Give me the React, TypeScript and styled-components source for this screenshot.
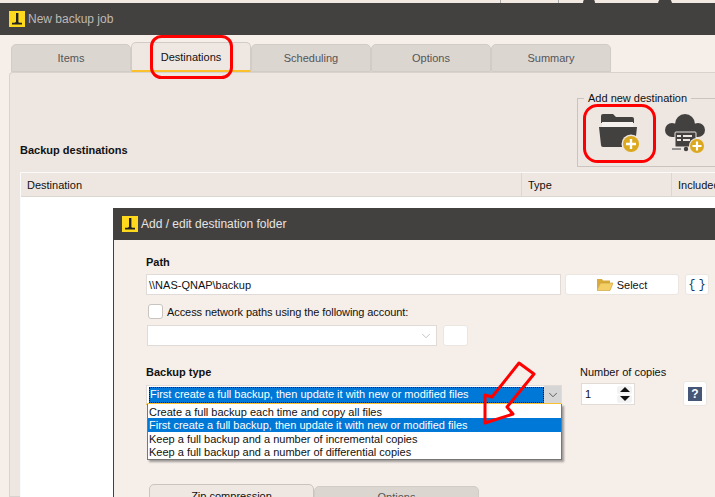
import { ChevronDown } from 'lucide-react'
import styled, { createGlobalStyle } from 'styled-components'

const GlobalStyle = createGlobalStyle`
  html, body {
    margin: 0;
    padding: 0;
    background: #f5eee9;
  }
  * {
    box-sizing: border-box;
  }
`

const Page = styled.div`
  position: relative;
  width: 715px;
  height: 497px;
  overflow: hidden;
  background: #f5eee9;
  color: #111;
  font: 11px 'Liberation Sans', Arial, sans-serif;
`

const TitleBar = styled.div<{ $height: number; $inset: number }>`
  display: flex;
  align-items: center;
  gap: 3px;
  height: ${(p) => p.$height}px;
  padding-left: ${(p) => p.$inset}px;
  background: #434140;
  flex: none;
`

const TitleText = styled.span<{ $light?: boolean }>`
  color: ${(p) => (p.$light ? '#e8e4e0' : '#bdb9b5')};
  font-size: 12px;
`

const TopStrip = styled.div`
  height: 3px;
  background: #f2e9e3;
  svg {
    display: block;
  }
`

const TabRow = styled.div<{ $top: number; $left: number; $width: number }>`
  display: flex;
  align-items: flex-end;
  height: ${(p) => p.$top}px;
  margin-left: ${(p) => p.$left}px;
  width: ${(p) => p.$width}px;
`

const Tab = styled.div<{ $active?: boolean; $width: number }>`
  width: ${(p) => p.$width}px;
  height: ${(p) => (p.$active ? 30 : 28)}px;
  display: flex;
  align-items: center;
  justify-content: center;
  background: ${(p) => (p.$active ? '#eee7e2' : '#dcd6d1')};
  border: 1px solid #d2ccc7;
  border-bottom: ${(p) => (p.$active ? '2px solid #fbc02d' : '1px solid #d2ccc7')};
  border-radius: 5px 5px 0 0;
  color: ${(p) => (p.$active ? '#111' : '#555')};
`

const BottomTabs = styled.div`
  display: flex;
  align-items: flex-start;
  margin: 78px 0 0 3px;
  height: 26px;
`

const BottomTab = styled.div<{ $active?: boolean; $width: number }>`
  width: ${(p) => p.$width}px;
  height: 26px;
  margin-top: ${(p) => (p.$active ? 0 : 2)}px;
  padding-top: ${(p) => (p.$active ? 5 : 4)}px;
  text-align: center;
  background: ${(p) => (p.$active ? '#eee7e2' : '#dcd6d1')};
  border: 1px solid ${(p) => (p.$active ? '#c9c4bf' : '#d2ccc7')};
  border-radius: 5px 5px 0 0;
  color: ${(p) => (p.$active ? '#111' : '#555')};
`

const Panel = styled.div`
  margin-left: 9px;
  height: 425px;
  padding: 25px 0 0 10px;
  background: #ede6e1;
  border: 1px solid #d8d3ce;
  border-right: 0;
  border-radius: 4px 0 0 0;
`

const PanelTop = styled.div`
  display: flex;
  justify-content: space-between;
  align-items: flex-end;
  height: 69px;
`

const SectionTitle = styled.div`
  font-weight: 700;
  margin-bottom: 11px;
`

const GroupBox = styled.div`
  position: relative;
  display: flex;
  width: 150px;
  height: 69px;
  margin-right: -12px;
  padding: 7px 0 0 16px;
  gap: 20px;
  border: 1px solid #c9c4bf;
  border-right: 0;
`

const GroupLegend = styled.span`
  position: absolute;
  top: -7px;
  left: 6px;
  padding: 0 4px;
  line-height: 13px;
  background: #ede6e1;
`

const IconSlot = styled.div<{ $width: number }>`
  width: ${(p) => p.$width}px;
  height: 56px;
  flex: none;
  display: flex;
  align-items: center;
  justify-content: center;
`

const Table = styled.div`
  margin-top: 5px;
  height: 330px;
  background: #fff;
  border-top: 1px solid #fbfafa;
  border-left: 1px solid #fbfafa;
`

const TableHead = styled.div`
  display: grid;
  grid-template-columns: 501px 150px 1fr;
  height: 24px;
  background: #ede6e1;
  border-bottom: 1px solid #dcd6d1;
`

const HeadCell = styled.div`
  display: flex;
  align-items: center;
  padding-left: 6px;
  white-space: nowrap;
  border-right: 1px solid #dcd6d1;
`

const Dialog = styled.div`
  position: absolute;
  left: 113px;
  top: 208px;
  width: 602px;
  height: 289px;
  display: flex;
  flex-direction: column;
  overflow: hidden;
  background: #f5eee9;
  border-left: 1px solid #434140;
`

const DialogBody = styled.div`
  padding: 15px 0 0 32px;
  display: flex;
  flex-direction: column;
`

const Label = styled.div`
  font-weight: 700;
  line-height: 14px;
`

const Row = styled.div<{ $gap?: number; $top?: number }>`
  display: flex;
  align-items: center;
  gap: ${(p) => p.$gap ?? 4}px;
  margin-top: ${(p) => p.$top ?? 0}px;
`

const Field = styled.div<{ $width: number; $inset?: number }>`
  display: flex;
  align-items: center;
  justify-content: space-between;
  width: ${(p) => p.$width}px;
  height: 21px;
  margin-left: ${(p) => p.$inset ?? 0}px;
  padding: 0 3px 0 2px;
  background: #fff;
  border: 1px solid #e0dbd6;
`

const WhiteButton = styled.div<{ $width: number; $height?: number; $offset?: number }>`
  display: flex;
  align-items: center;
  justify-content: center;
  gap: 4px;
  width: ${(p) => p.$width}px;
  height: ${(p) => p.$height ?? 21}px;
  margin-left: ${(p) => p.$offset ?? 0}px;
  background: #fff;
  border: 1px solid #ece6e1;
  border-radius: 3px;
`

const BraceText = styled.span`
  font: 12px 'Liberation Mono', monospace;
  letter-spacing: -2px;
  margin-left: -2px;
  color: #123a66;
`

const Check = styled.div`
  width: 15px;
  height: 15px;
  margin-left: 2px;
  background: #fff;
  border: 1px solid #c9c4bf;
  border-radius: 3px;
`

const CheckLabel = styled.span`
  letter-spacing: -0.08px;
`

const TypeRow = styled.div`
  display: flex;
  margin-top: 19px;
`

const TypeColumn = styled.div`
  position: relative;
  width: 434px;
`

const Combo = styled.div`
  display: flex;
  align-items: center;
  justify-content: space-between;
  width: 416px;
  height: 20px;
  margin-top: 6px;
  background: #fff;
  border: 1px solid #e0dbd6;
  border-bottom: 2px solid #fbc02d;
`

const ComboValue = styled.div`
  flex: 1;
  height: 16px;
  margin-left: 2px;
  padding-left: 1px;
  line-height: 15px;
  color: #fff;
  background: #0078d7;
  outline: 1px dotted #111;
  outline-offset: -1px;
`

const ComboArrow = styled.div`
  width: 17px;
  height: 17px;
  display: flex;
  align-items: center;
  justify-content: center;
  background: #d6d6d6;
`

const DropList = styled.div`
  position: absolute;
  top: 39px;
  left: 1px;
  width: 415px;
  padding: 1px 0;
  background: #fff;
  border: 1px solid #777;
  border-top: 0;
  box-shadow: 2px 2px 2px rgba(0, 0, 0, 0.35);
`

const DropItem = styled.div<{ $selected?: boolean }>`
  height: 13.3px;
  padding-left: 1px;
  line-height: 14px;
  color: ${(p) => (p.$selected ? '#fff' : '#111')};
  background: ${(p) => (p.$selected ? '#0078d7' : '#fff')};
`

const CopiesColumn = styled.div`
  width: 60px;
`

const CopiesLabel = styled.div`
  white-space: nowrap;
  line-height: 14px;
`

const Spinner = styled.div`
  display: flex;
  align-items: center;
  justify-content: space-between;
  width: 54px;
  height: 22px;
  margin: 4px 0 0 1px;
  padding: 0 2px 0 3px;
  background: #fff;
  border: 1px solid #e0dbd6;
`

const SpinArrows = styled.div`
  display: flex;
  flex-direction: column;
  gap: 1px;
  width: 15px;
`

const SpinStep = styled.div`
  height: 8px;
  display: flex;
  align-items: center;
  justify-content: center;
  background: #f3f3f3;
  border-radius: 2px;
`

const SpinArrow = styled.div<{ $down?: boolean }>`
  width: 0;
  height: 0;
  border-left: 5px solid transparent;
  border-right: 5px solid transparent;
  ${(p) => (p.$down ? 'border-top: 5px solid #111;' : 'border-bottom: 5px solid #111;')}
`

const HelpSlot = styled.div`
  margin: 16px 0 0 43px;
`

const HelpGlyph = styled.div`
  width: 14px;
  height: 14px;
  display: flex;
  align-items: center;
  justify-content: center;
  background: #465677;
  color: #fff;
  font-weight: 700;
  font-size: 12px;
`

const Annotation = styled.svg`
  position: absolute;
  left: 0;
  top: 0;
  pointer-events: none;
`

const AppLogo = () => (
  <svg width="16" height="16" viewBox="0 0 16 16">
    <rect width="16" height="16" fill="#fdd81d" />
    <path d="M7 2h2.4v8.6c0 .8.5 1.2 1.2 1.2H13v1.6H3v-1.6h2.4c.9 0 1.6-.4 1.6-1.2z" fill="#222" />
  </svg>
)

const FolderAdd = () => (
  <svg width="50" height="50" viewBox="0 0 50 50">
    <path d="M7 7a2 2 0 0 1 2-2h10l3 3h16a2 2 0 0 1 2 2v4H7z" fill="#434140" />
    <path d="M5 18h38l-2 18a2 2 0 0 1-2 2H9a2 2 0 0 1-2-2z" fill="#434140" />
    <rect x="8" y="13" width="31" height="5" fill="#f5f1ee" />
    <circle cx="37" cy="35" r="9.5" fill="#ede6e1" />
    <circle cx="37" cy="35" r="8" fill="#dba81e" />
    <path d="M37 30v10M32 35h10" stroke="#fff" strokeWidth="2.4" />
  </svg>
)

const CloudAdd = () => (
  <svg width="44" height="50" viewBox="0 0 44 50">
    <circle cx="21" cy="15" r="10" fill="#434140" />
    <circle cx="8" cy="21" r="7" fill="#434140" />
    <circle cx="34" cy="21" r="7" fill="#434140" />
    <rect x="8" y="18" width="26" height="10" fill="#434140" />
    <rect x="11" y="23" width="21" height="15" rx="1" fill="#434140" stroke="#ede6e1" />
    <path d="M13 26h4v2h-4zM13 30h4v2h-4zM19 26h9v2h-9zM19 30h7v2h-7z" fill="#ede6e1" />
    <path d="M8 40h9M26 40h6M22 38v2" stroke="#777" strokeWidth="1.6" />
    <circle cx="22" cy="40" r="2.2" fill="#434140" />
    <circle cx="33" cy="37" r="8" fill="#ede6e1" />
    <circle cx="33" cy="37" r="7" fill="#dba81e" />
    <path d="M33 32.5v9M28.5 37h9" stroke="#fff" strokeWidth="2.2" />
  </svg>
)

const FolderOpen = () => (
  <svg width="16" height="13" viewBox="0 0 16 13">
    <path d="M0 1h5l1 1.5h7V5H3.5L0 12z" fill="#d9ab3a" />
    <path d="M3.5 5H16l-3 7.5H0z" fill="#f3cf66" stroke="#c79a30" strokeWidth=".6" />
  </svg>
)

const App = () => {
  return (
    <Page>
      <GlobalStyle />
      <TopStrip>
        <svg width="715" height="3" viewBox="0 0 715 3">
          <path d="M558 0h1v3h-1zM500 0h1v3h-1z" fill="#aaa" />
          <circle cx="589" cy="3" r="6" fill="#434140" />
          <circle cx="665" cy="4" r="7" fill="#434140" />
        </svg>
      </TopStrip>
      <TitleBar $height={32} $inset={9}>
        <AppLogo />
        <TitleText>New backup job</TitleText>
      </TitleBar>
      <TabRow $top={37} $left={11} $width={600}>
        <Tab $width={120}>Items</Tab>
        <Tab $width={120} $active>Destinations</Tab>
        <Tab $width={120}>Scheduling</Tab>
        <Tab $width={120}>Options</Tab>
        <Tab $width={120}>Summary</Tab>
      </TabRow>
      <Panel>
        <PanelTop>
          <SectionTitle>Backup destinations</SectionTitle>
          <GroupBox>
            <GroupLegend>Add new destination</GroupLegend>
            <IconSlot $width={50}><FolderAdd /></IconSlot>
            <IconSlot $width={44}><CloudAdd /></IconSlot>
          </GroupBox>
        </PanelTop>
        <Table>
          <TableHead>
            <HeadCell>Destination</HeadCell>
            <HeadCell>Type</HeadCell>
            <HeadCell>Included</HeadCell>
          </TableHead>
        </Table>
      </Panel>

      <Dialog>
        <TitleBar $height={32} $inset={8}>
          <AppLogo />
          <TitleText $light>Add / edit destination folder</TitleText>
        </TitleBar>
        <DialogBody>
          <Label>Path</Label>
          <Row $top={5}>
            <Field $width={415}>\\NAS-QNAP\backup</Field>
            <WhiteButton $width={114}>
              <FolderOpen />
              Select
            </WhiteButton>
            <WhiteButton $width={24} $offset={2}>
              <BraceText>{'{ }'}</BraceText>
            </WhiteButton>
          </Row>
          <Row $top={9} $gap={4}>
            <Check />
            <CheckLabel>Access network paths using the following account:</CheckLabel>
          </Row>
          <Row $top={6} $gap={6}>
            <Field $width={290} $inset={1}>
              <span />
              <ChevronDown size={14} strokeWidth={1} color="#999" />
            </Field>
            <WhiteButton $width={25} />
          </Row>
          <TypeRow>
            <TypeColumn>
              <Label>Backup type</Label>
              <Combo>
                <ComboValue>First create a full backup, then update it with new or modified files</ComboValue>
                <ComboArrow>
                  <ChevronDown size={14} strokeWidth={1.4} color="#444" />
                </ComboArrow>
              </Combo>
              <DropList>
                <DropItem>Create a full backup each time and copy all files</DropItem>
                <DropItem $selected>First create a full backup, then update it with new or modified files</DropItem>
                <DropItem>Keep a full backup and a number of incremental copies</DropItem>
                <DropItem>Keep a full backup and a number of differential copies</DropItem>
              </DropList>
            </TypeColumn>
            <CopiesColumn>
              <CopiesLabel>Number of copies</CopiesLabel>
              <Spinner>
                1
                <SpinArrows>
                  <SpinStep><SpinArrow /></SpinStep>
                  <SpinStep><SpinArrow $down /></SpinStep>
                </SpinArrows>
              </Spinner>
            </CopiesColumn>
            <HelpSlot>
              <WhiteButton $width={24} $height={25}>
                <HelpGlyph>?</HelpGlyph>
              </WhiteButton>
            </HelpSlot>
          </TypeRow>
          <BottomTabs>
            <BottomTab $width={165} $active>Zip compression</BottomTab>
            <BottomTab $width={165}>Options</BottomTab>
          </BottomTabs>
        </DialogBody>
      </Dialog>

      <Annotation width="715" height="497" viewBox="0 0 715 497" fill="none">
        <rect x="151.5" y="36.5" width="80" height="41" rx="10" stroke="#f00" strokeWidth="3" />
        <rect x="584.5" y="105.5" width="70" height="56" rx="13" stroke="#f00" strokeWidth="3" />
        <path d="M519 363l15 11-27 33 6 7-28 9v-28l7 2z" stroke="#f00" strokeWidth="3" strokeLinejoin="round" />
      </Annotation>
    </Page>
  )
}

export default App
